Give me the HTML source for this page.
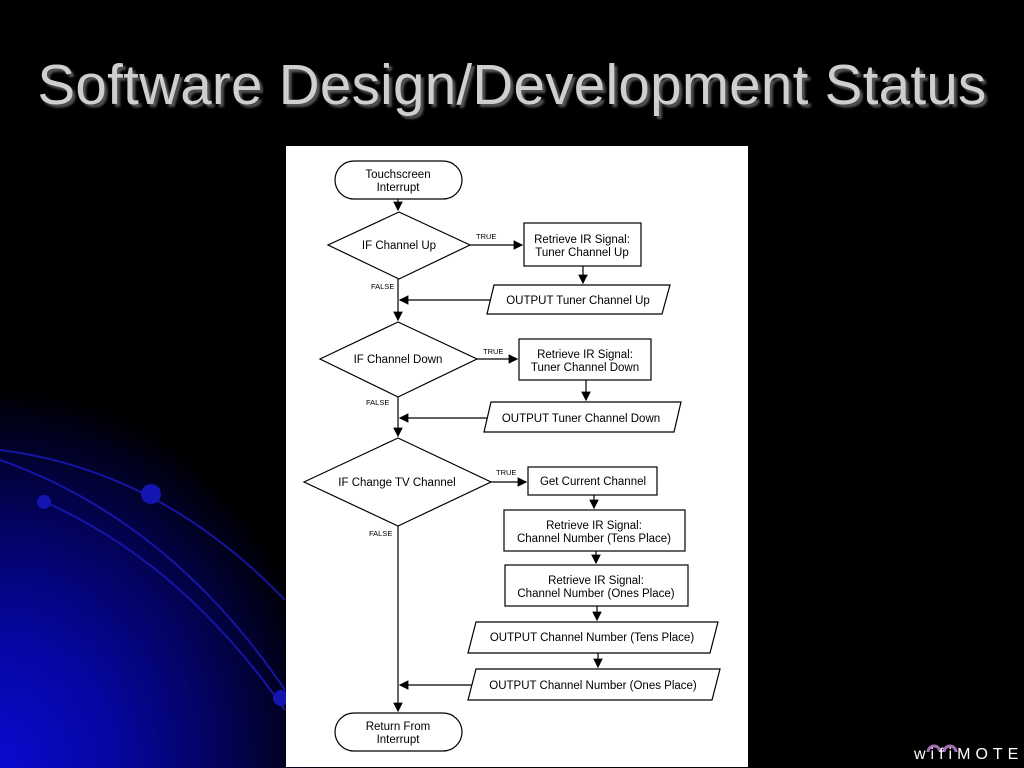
<!DOCTYPE html>
<html><head><style>
html,body{margin:0;padding:0;}
body{width:1024px;height:768px;overflow:hidden;background:#000;position:relative;font-family:"Liberation Sans",sans-serif;}
.bg{position:absolute;left:0;top:0;width:1024px;height:768px;background:radial-gradient(ellipse 330px 380px at 0px 768px,#0a0ad0 0%,#0606a0 35%,#030360 65%,#000 100%);}
h1{position:absolute;left:0;width:1024px;top:52px;margin:0;text-align:center;font-weight:normal;font-size:56.5px;color:#cfcfcf;text-shadow:3px 3px 2px #555;letter-spacing:0.3px;}
.logo{position:absolute;left:914px;top:746px;color:#fff;font-size:16px;letter-spacing:5px;}
svg text{font-family:"Liberation Sans",sans-serif;}
</style></head><body>
<div class="bg"></div>
<svg style="position:absolute;left:0;top:0" width="1024" height="768">
<g fill="none" stroke="#1a1ac0" stroke-width="2" opacity="0.8">
<path d="M0 450 Q160 470 285 600"/>
<path d="M0 460 Q170 520 285 690"/>
<path d="M40 500 Q180 560 285 710"/>
</g>
<circle cx="151" cy="494" r="10" fill="#1414b0"/>
<circle cx="44" cy="502" r="7" fill="#1414b0"/>
<circle cx="281" cy="698" r="8" fill="#1414b0"/>
<path d="M928 752 a6 6 0 0 1 12 0 M944 752 a6 6 0 0 1 12 0" stroke="#a070b0" stroke-width="3" fill="none"/>
</svg>
<h1>Software Design/Development Status</h1>
<div class="logo">wifiMOTE</div>
<svg style="position:absolute;left:0;top:0" width="1024" height="768" font-size="11.5">
<defs><marker id="a" markerWidth="8" markerHeight="8" refX="7" refY="4" orient="auto"><path d="M0 0L8 4L0 8z" fill="#000"/></marker></defs>
<rect x="286" y="146" width="462" height="621" fill="#fff"/>
<g stroke="#000" stroke-width="1.2" fill="#fff">
<rect x="335" y="161" width="127" height="38" rx="19"/>
<line x1="398" y1="199" x2="398" y2="210" marker-end="url(#a)"/>
<polygon points="328,245 399,212 470,245 399,279"/>
<line x1="470" y1="245" x2="522" y2="245" marker-end="url(#a)"/>
<rect x="524" y="223" width="117" height="43"/>
<line x1="583" y1="266" x2="583" y2="283" marker-end="url(#a)"/>
<polygon points="494,285 670,285 662,314 487,314"/>
<line x1="490" y1="300" x2="400" y2="300" marker-end="url(#a)"/>
<line x1="398" y1="279" x2="398" y2="320" marker-end="url(#a)"/>
<polygon points="320,359 398,322 477,359 398,397"/>
<line x1="477" y1="359" x2="517" y2="359" marker-end="url(#a)"/>
<rect x="519" y="339" width="132" height="41"/>
<line x1="586" y1="380" x2="586" y2="400" marker-end="url(#a)"/>
<polygon points="491,402 681,402 674,432 484,432"/>
<line x1="487" y1="418" x2="400" y2="418" marker-end="url(#a)"/>
<line x1="398" y1="397" x2="398" y2="436" marker-end="url(#a)"/>
<polygon points="304,482 398,438 491,482 398,526"/>
<line x1="491" y1="482" x2="526" y2="482" marker-end="url(#a)"/>
<rect x="528" y="467" width="129" height="28"/>
<line x1="594" y1="495" x2="594" y2="508" marker-end="url(#a)"/>
<rect x="504" y="510" width="181" height="41"/>
<line x1="596" y1="551" x2="596" y2="563" marker-end="url(#a)"/>
<rect x="505" y="565" width="183" height="41"/>
<line x1="597" y1="606" x2="597" y2="620" marker-end="url(#a)"/>
<polygon points="476,622 718,622 710,653 468,653"/>
<line x1="598" y1="653" x2="598" y2="667" marker-end="url(#a)"/>
<polygon points="476,669 720,669 712,700 468,700"/>
<line x1="472" y1="685" x2="400" y2="685" marker-end="url(#a)"/>
<line x1="398" y1="526" x2="398" y2="711" marker-end="url(#a)"/>
<rect x="335" y="713" width="127" height="38" rx="19"/>
</g>
<g fill="#000" text-anchor="middle">
<text x="398" y="178">Touchscreen</text><text x="398" y="191">Interrupt</text>
<text x="399" y="249">IF Channel Up</text>
<text x="582" y="243">Retrieve IR Signal:</text><text x="582" y="256">Tuner Channel Up</text>
<text x="578" y="304">OUTPUT Tuner Channel Up</text>
<text x="398" y="363">IF Channel Down</text>
<text x="585" y="358">Retrieve IR Signal:</text><text x="585" y="371">Tuner Channel Down</text>
<text x="581" y="422">OUTPUT Tuner Channel Down</text>
<text x="397" y="486">IF Change TV Channel</text>
<text x="593" y="485">Get Current Channel</text>
<text x="594" y="529">Retrieve IR Signal:</text><text x="594" y="542">Channel Number (Tens Place)</text>
<text x="596" y="584">Retrieve IR Signal:</text><text x="596" y="597">Channel Number (Ones Place)</text>
<text x="592" y="641">OUTPUT Channel Number (Tens Place)</text>
<text x="593" y="689">OUTPUT Channel Number (Ones Place)</text>
<text x="398" y="730">Return From</text><text x="398" y="743">Interrupt</text>
</g>
<g fill="#000" font-size="7.5">
<text x="476" y="239">TRUE</text><text x="371" y="289">FALSE</text>
<text x="483" y="354">TRUE</text><text x="366" y="405">FALSE</text>
<text x="496" y="475">TRUE</text><text x="369" y="536">FALSE</text>
</g>
</svg>
</body></html>
